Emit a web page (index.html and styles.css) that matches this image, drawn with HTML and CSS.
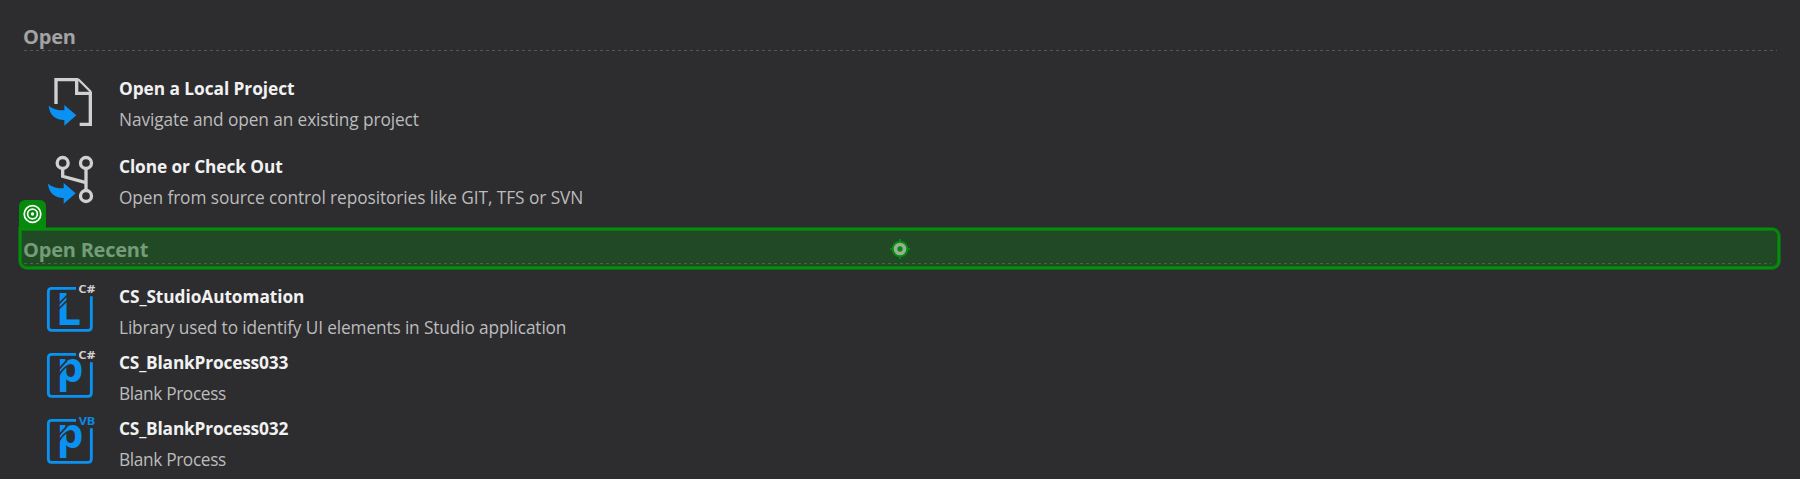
FILE: index.html
```html
<!DOCTYPE html>
<html lang="en">
<head>
<meta charset="utf-8">
<title>Open</title>
<link rel="stylesheet" href="styles.css">
</head>
<body>
<svg class="defs" aria-hidden="true">
  <defs>
    <path id="arrow" class="blue" d="M26 107Q45 122 73 121V105L109 136L73 167V150Q30 148 26 107Z"/>
    <path id="frame" class="frame" d="M108 31H35Q25 31 25 41V147Q25 157 35 157H144Q154 157 154 147V55"/>
    <path id="slashes" class="slashes" d="M56 78L82 52M56 93L82 67"/>
    <path id="slashes-p" class="slashes" d="M56 76L80 50M56 95Q66 76 82 66"/>
  </defs>
</svg>
<main class="page">
  <section class="group">
    <h2 class="heading">Open</h2>
    <div class="items items-open">
      <div class="item">
        <svg class="icon" viewBox="0 9 192 186">
          <path class="doc" d="M48 102V29H114M110 29V70H151V163H119"/>
          <path class="doc-fold" d="M114 27L153 66"/>
          <use href="#arrow"/>
        </svg>
        <div class="text">
          <div class="title t-local">Open a Local Project</div>
          <div class="desc d-local">Navigate and open an existing project</div>
        </div>
      </div>
      <div class="item">
        <svg class="icon" viewBox="0 18 192 186">
          <g class="fork">
            <circle cx="68" cy="54" r="16.5"/><circle cx="138" cy="54" r="16.5"/><circle cx="138" cy="153" r="16.5"/>
            <path d="M138 72V135M68 72V94L138 113"/>
          </g>
          <use href="#arrow" x="-2" y="9"/>
        </svg>
        <div class="text">
          <div class="title t-clone">Clone or Check Out</div>
          <div class="desc d-clone">Open from source control repositories like GIT, TFS or SVN</div>
        </div>
      </div>
    </div>
  </section>
  <section class="group group-recent">
    <div class="highlight">
      <svg class="tab" viewBox="0 0 27 28">
        <circle cx="13.5" cy="14" r="8.3"/><circle cx="13.5" cy="14" r="4.9"/><circle class="dot" cx="13.5" cy="14" r="1.7"/>
      </svg>
      <h2 class="heading heading-recent">Open Recent</h2>
      <svg class="anchor" viewBox="0 0 60 60">
        <path d="M30 0V60M0 30H60"/><circle class="disc" cx="30" cy="30" r="25"/><circle class="ring" cx="30" cy="30" r="13.5"/>
      </svg>
    </div>
    <div class="items items-recent">
      <div class="item">
        <svg class="icon" viewBox="0 9 192 186">
          <use href="#frame"/><text class="letter letter-l" x="47" y="142" textLength="76" lengthAdjust="spacingAndGlyphs">L</text><use href="#slashes"/>
          <text class="lang" x="115" y="45" textLength="51" lengthAdjust="spacingAndGlyphs">C#</text>
        </svg>
        <div class="text">
          <div class="title t-studio">CS_StudioAutomation</div>
          <div class="desc d-studio">Library used to identify UI elements in Studio application</div>
        </div>
      </div>
      <div class="item">
        <svg class="icon" viewBox="0 9 192 186">
          <use href="#frame"/><text class="letter letter-p" x="50" y="113" textLength="80" lengthAdjust="spacingAndGlyphs">p</text><use href="#slashes-p"/>
          <text class="lang" x="115" y="45" textLength="51" lengthAdjust="spacingAndGlyphs">C#</text>
        </svg>
        <div class="text">
          <div class="title t-blank">CS_BlankProcess033</div>
          <div class="desc d-blank">Blank Process</div>
        </div>
      </div>
      <div class="item">
        <svg class="icon" viewBox="0 9 192 186">
          <use href="#frame"/><text class="letter letter-p" x="50" y="113" textLength="80" lengthAdjust="spacingAndGlyphs">p</text><use href="#slashes-p"/>
          <text class="lang lang-vb" x="116" y="45" textLength="50" lengthAdjust="spacingAndGlyphs">VB</text>
        </svg>
        <div class="text">
          <div class="title t-blank">CS_BlankProcess032</div>
          <div class="desc d-blank">Blank Process</div>
        </div>
      </div>
    </div>
  </section>
</main>
</body>
</html>
```
FILE: styles.css
```css
* { box-sizing: border-box; }
body { margin: 0; background: #2d2d30; font-family: "Open Sans", "Noto Sans", sans-serif; }
.defs { display: block; width: 0; height: 0; }
.page { height: 479px; overflow: hidden; padding: 22px 19px 0 18px; }
.heading {
  margin: 0 4px 0 5px; height: 29px; line-height: 29px; width: max-content; min-width: calc(100% - 9px);
  font-size: 20px; font-weight: 700; color: #a3a3a3; letter-spacing: -0.22px;
  background: repeating-linear-gradient(90deg, #565659 0 3px, transparent 3px 6px) left 1px bottom / 100% 1px no-repeat;
}
.items { display: flex; flex-direction: column; padding-left: 22px; }
.items-open { gap: 16px; padding-top: 22px; }
.items-recent { gap: 4px; padding-top: 12px; }
.item { display: flex; gap: 15px; height: 62px; }
.icon { width: 64px; height: 62px; flex: none; overflow: visible; }
.text { white-space: nowrap; line-height: 31px; font-size: 17.3px; }
.title { color: #f1f1f1; font-weight: 700; }
.t-local { letter-spacing: -0.05px; }
.t-clone { letter-spacing: -0.1px; }
.t-studio { letter-spacing: -0.07px; }
.t-blank { letter-spacing: -0.18px; }
.desc { color: #bcbcbc; }
.d-local { letter-spacing: -0.1px; }
.d-clone { letter-spacing: -0.08px; }
.d-studio { letter-spacing: -0.14px; }
.d-blank { letter-spacing: -0.36px; }
.highlight {
  position: relative; margin: 15px 1px 0; height: 41px;
  border: 2px solid #058e0b; border-radius: 8px; border-top-left-radius: 0; background: #224926;
  box-shadow: 0 0 0 1px #12631a, inset 0 0 0 1px #0d7514;
}
.heading-recent {
  margin: 0 3px 0 2px; padding-top: 5px; height: 34px; color: #759c78;
  background-image: repeating-linear-gradient(90deg, #416944 0 3px, transparent 3px 6px);
}
.tab {
  position: absolute; left: -2.5px; top: -30px; width: 27px; height: 28px;
  background: #058a0c; border-radius: 6px 6px 0 0; fill: none; stroke: #fff; stroke-width: 1.7;
}
.dot { fill: #fff; stroke: none; }
.anchor { position: absolute; left: 869px; top: 9px; width: 20px; height: 20px; fill: none; stroke: #058a0c; stroke-width: 6; }
.disc { fill: #058a0c; stroke: none; }
.ring { stroke: #98ad9a; stroke-width: 11; }
.blue { fill: #0a92f3; }
.doc { fill: none; stroke: #d0d0d0; stroke-width: 10; }
.doc-fold { fill: none; stroke: #d0d0d0; stroke-width: 7; }
.fork { fill: none; stroke: #d0d0d0; stroke-width: 10; }
.frame { fill: none; stroke: #0a92f3; stroke-width: 8.5; }
.slashes { stroke: #2d2d30; stroke-width: 5; fill: none; }
.letter { fill: #0a92f3; font-weight: 700; }
.letter-l { font-size: 136px; }
.letter-p { font-size: 121px; }
.lang { fill: #d0d0d0; font-size: 31px; font-weight: 700; }
.lang-vb { fill: #0a8ae6; }
```
